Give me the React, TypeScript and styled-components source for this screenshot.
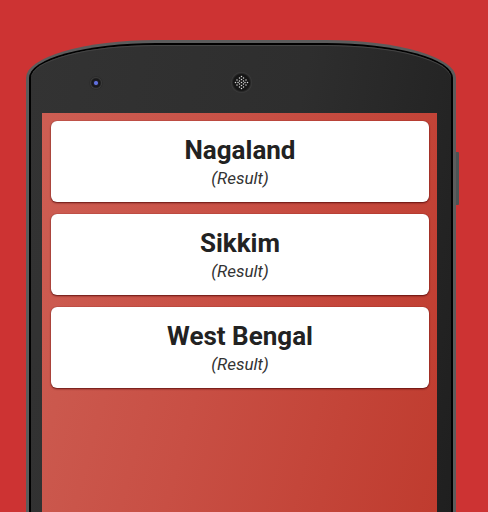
import styled, { createGlobalStyle } from 'styled-components';

const GlobalStyle = createGlobalStyle`
  html, body {
    margin: 0;
    padding: 0;
    background: #cd3333;
  }
  body {
    font-family: Roboto, 'Liberation Sans', sans-serif;
  }
`;

const Page = styled.main`
  width: 488px;
  height: 512px;
  overflow: hidden;
  background: #cd3333;
  display: flex;
  align-items: flex-start;
  padding: 40px 0 0 26px;
  box-sizing: border-box;
`;

const Phone = styled.div`
  width: 430px;
  height: 500px;
  flex-shrink: 0;
  box-sizing: border-box;
  background: #000;
  border: 3px solid #5c5c5c;
  border-bottom: none;
  border-radius: 130px 130px 0 0 / 38px 38px 0 0;
  padding: 2px 2px 0;
`;

const Body = styled.div`
  height: 100%;
  box-sizing: border-box;
  border-radius: 125px 125px 0 0 / 33px 33px 0 0;
  background: linear-gradient(100deg, #333 0%, #2e2e2e 55%, #1f1f1f 100%);
  box-shadow: inset 0 1px 0 #444;
  padding: 0 14px 0 11px;
  display: flex;
  flex-direction: column;
`;

const Bezel = styled.div`
  height: 68px;
  display: flex;
  align-items: center;
  padding-left: 48px;
  gap: 129px;
`;

const Camera = styled.div`
  width: 12px;
  height: 12px;
  border-radius: 50%;
  margin-top: 8px;
  background: radial-gradient(circle at 50% 50%, #6070e0 0 1.5px, #20202a 2.5px, #151515 4px, #454545 6px);
  box-shadow: 0 0 1px #000;
`;

const Speaker = styled.div`
  width: 21px;
  height: 21px;
  border-radius: 50%;
  margin-top: 6px;
  background: radial-gradient(circle, #161616 0 8px, #404040 10.5px);
  display: flex;
  align-items: center;
  justify-content: center;
`;

const Screen = styled.section`
  flex: 1;
  background: linear-gradient(105deg, #cd5e53 0%, #c84f44 45%, #bf3b2e 100%);
  padding: 8px 8px 0 9px;
  display: flex;
  flex-direction: column;
  gap: 12px;
`;

const Card = styled.div`
  height: 81px;
  box-sizing: border-box;
  background: #fff;
  border-radius: 6px;
  box-shadow: 0 1px 2px rgba(70, 0, 0, 0.75), 0 0 1px rgba(90, 10, 10, 0.6);
  display: flex;
  flex-direction: column;
  align-items: center;
  justify-content: center;
`;

const Title = styled.div`
  font-family: Roboto, 'Liberation Sans', sans-serif;
  font-weight: 700;
  font-size: 26px;
  line-height: 30px;
  color: #222;
`;

const Result = styled.div`
  font-family: Roboto, 'Liberation Sans', sans-serif;
  font-style: italic;
  font-size: 17px;
  line-height: 20px;
  margin-top: 3px;
  color: #333;
`;

const SideButton = styled.div`
  width: 3px;
  height: 53px;
  margin-top: 112px;
  background: #4b5354;
  border-radius: 0 1px 1px 0;
`;

const SpeakerGrille = () => (
  <svg width="15" height="15" viewBox="0 0 15 15">
    {[
      [7.5, 1.5], [5.5, 3], [9.5, 3], [3, 5], [7.5, 4.5], [12, 5],
      [5.5, 6], [9.5, 6], [1.5, 7.5], [4, 7.5], [7.5, 7.5], [11, 7.5], [13.5, 7.5],
      [5.5, 9], [9.5, 9], [3, 10], [7.5, 10.5], [12, 10], [5.5, 12], [9.5, 12], [7.5, 13.5],
    ].map(([cx, cy], i) => (
      <circle key={i} cx={cx} cy={cy} r="0.75" fill="#d8d8d8" />
    ))}
  </svg>
);

const states = ['Nagaland', 'Sikkim', 'West Bengal'];

export default function App() {
  return (
    <>
      <GlobalStyle />
      <Page>
        <Phone>
          <Body>
            <Bezel>
              <Camera />
              <Speaker>
                <SpeakerGrille />
              </Speaker>
            </Bezel>
            <Screen>
              {states.map((name) => (
                <Card key={name}>
                  <Title>{name}</Title>
                  <Result>(Result)</Result>
                </Card>
              ))}
            </Screen>
          </Body>
        </Phone>
        <SideButton />
      </Page>
    </>
  );
}
